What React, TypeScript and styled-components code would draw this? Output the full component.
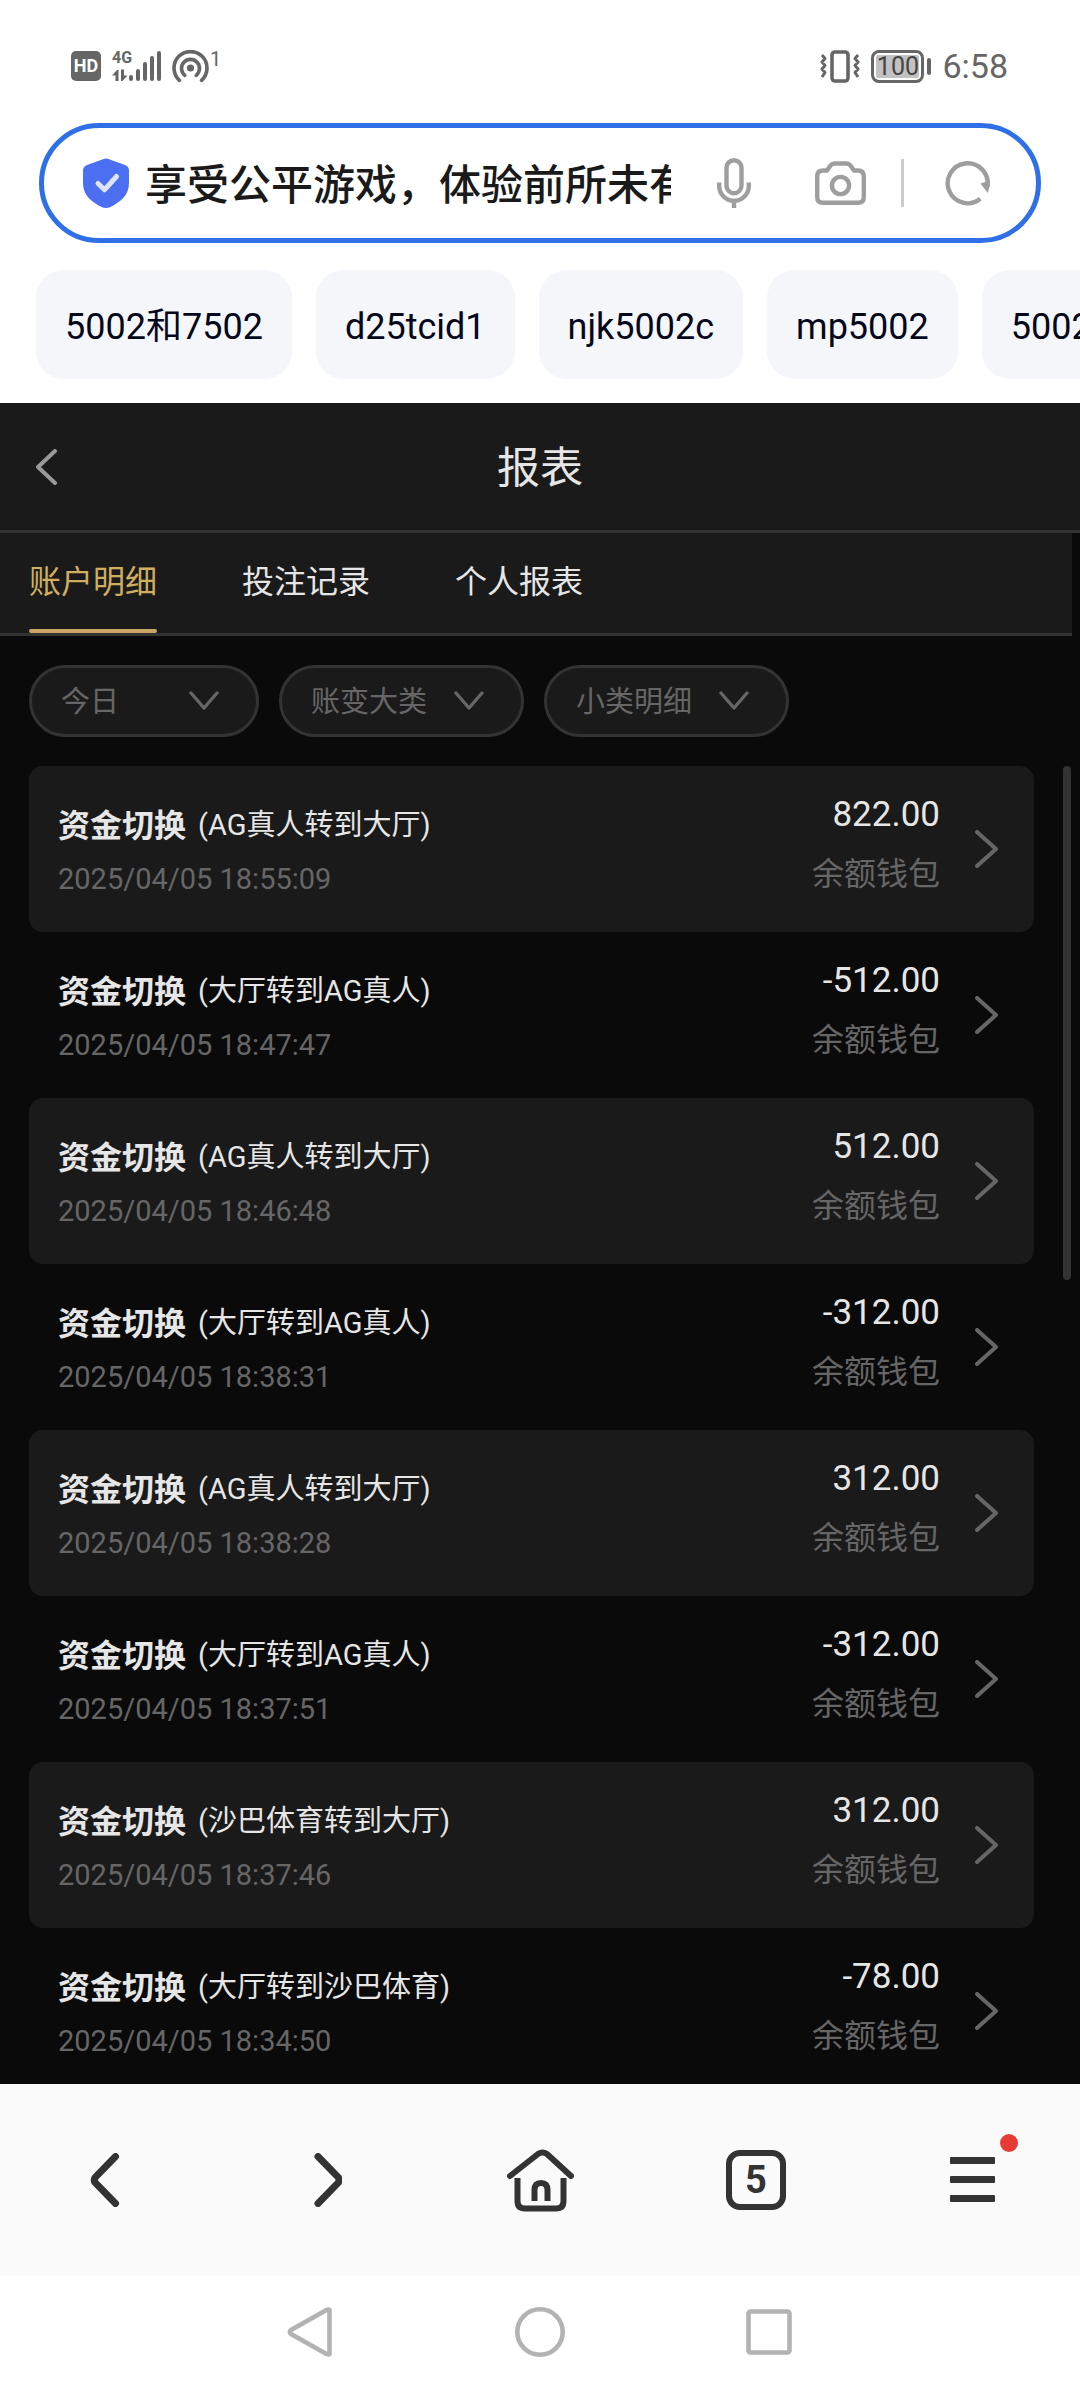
import React from "react";
import styled, { createGlobalStyle } from "styled-components";

const GlobalStyle = createGlobalStyle`
  *, *::before, *::after { box-sizing: border-box; }
  html, body { margin: 0; background: #fff; }
  body, button, input, select {
    font-family: Roboto, "Noto Sans CJK SC", sans-serif;
  }
  button { border: 0; padding: 0; background: none; color: inherit; cursor: pointer; }
  svg { display: block; flex: none; }
`;

const Screen = styled.div`
  display: flex;
  flex-direction: column;
  height: 100vh;
  overflow: hidden;
`;

/* ---------- status bar ---------- */

const StatusBar = styled.div`
  display: flex;
  align-items: center;
  justify-content: space-between;
  padding: 46px 72px 37px 71px;
  height: 123px;
  color: #666;
`;

const StatusGroup = styled.div<{ $gap: number }>`
  display: flex;
  align-items: center;
  gap: ${(p) => p.$gap}px;
`;

const HdBadge = styled.span`
  width: 30px;
  height: 30px;
  border-radius: 5px;
  background: #666;
  color: #fff;
  font-size: 18px;
  font-weight: 700;
  line-height: 30px;
  text-align: center;
`;

const Signal = styled.div`
  display: flex;
  align-items: flex-end;
  height: 32px;
`;

const NetworkType = styled.div`
  display: flex;
  flex-direction: column;
  justify-content: space-between;
  width: 17px;
  height: 32px;
  font-size: 16px;
  font-weight: 700;
  line-height: 16px;
`;

const Hotspot = styled.div`
  display: flex;
  align-items: flex-start;
  gap: 1px;
  height: 32px;
  font-size: 20px;
  line-height: 18px;
`;

const Battery = styled.div`
  display: flex;
  align-items: center;
  gap: 3px;
`;

const BatteryShell = styled.span`
  width: 53px;
  height: 33px;
  padding: 2px;
  border: 3px solid #666;
  border-radius: 8px;
`;

const BatteryLevel = styled.span`
  display: flex;
  align-items: center;
  justify-content: center;
  height: 23px;
  border-radius: 2px;
  background: #c2c2c2;
  color: #444;
  font-size: 25px;
  line-height: 23px;
`;

const BatteryTip = styled.span`
  width: 4px;
  height: 17px;
  border-radius: 2px;
  background: #666;
`;

const Clock = styled.span`
  font-size: 34px;
  line-height: 40px;
`;

/* ---------- address bar ---------- */

const AddressBar = styled.form`
  display: flex;
  align-items: center;
  height: 120px;
  margin: 0 39px;
  padding: 0 45px 0 39px;
  border: 5px solid #2f70e9;
  border-radius: 60px;
`;

const AddressInput = styled.input`
  flex: 1;
  min-width: 0;
  height: 64px;
  margin: 0 46px 0 16px;
  padding: 0 0 3px;
  border: 0;
  outline: 0;
  background: none;
  color: #1a1a1a;
  font-size: 42px;
  font-weight: 500;
`;

const AddressActions = styled.div`
  display: flex;
  align-items: center;
`;

const IconButton = styled.button<{ $width: number; $after?: number }>`
  width: ${(p) => p.$width}px;
  margin-right: ${(p) => p.$after ?? 0}px;
`;

const Divider = styled.span`
  width: 3px;
  height: 48px;
  margin-right: 41px;
  background: #ccc;
`;

/* ---------- suggestions ---------- */

const Chips = styled.div`
  display: flex;
  gap: 24px;
  padding: 27px 0 24px 36px;
  overflow: hidden;
`;

const Chip = styled.button`
  flex: none;
  height: 109px;
  padding: 4px 29px 0;
  border-radius: 28px;
  background: #f4f6fa;
  color: #05071a;
  font-size: 36px;
  line-height: 54px;
`;

/* ---------- report page ---------- */

const Page = styled.main`
  display: flex;
  flex: 1;
  flex-direction: column;
  min-height: 0;
  background: #0a0a0a;
  color: #e6e6e6;
`;

const PageHeader = styled.header`
  display: grid;
  grid-template-columns: 64px 1fr 64px;
  align-items: center;
  height: 130px;
  padding: 0 29px;
  border-bottom: 3px solid #333;
  background: #1a1a1a;
`;

const BackButton = styled.button`
  display: flex;
  align-items: center;
  height: 64px;
  padding-left: 7px;
`;

const PageTitle = styled.h1`
  margin: 0;
  padding-top: 2px;
  font-size: 43px;
  font-weight: 400;
  line-height: 64px;
  text-align: center;
`;

const Tabs = styled.nav`
  display: flex;
  gap: 85px;
  height: 103px;
  margin-right: 8px;
  padding-left: 29px;
  border-bottom: 3px solid #333;
  background: #1a1a1a;
`;

const Tab = styled.button<{ $active?: boolean }>`
  display: flex;
  flex-direction: column;
  justify-content: flex-end;
  color: ${(p) => (p.$active ? "#d0ae60" : "#e6e6e6")};
  font-size: 32px;
  line-height: 48px;

  &::after {
    content: "";
    width: 100%;
    height: 4px;
    margin-top: 23px;
    border-radius: 2px;
    background: ${(p) => (p.$active ? "#c9a663" : "transparent")};
  }
`;

const Filters = styled.div`
  display: flex;
  gap: 20px;
  padding: 29px;
`;

const Filter = styled.label<{ $width: number }>`
  display: flex;
  align-items: center;
  width: ${(p) => p.$width}px;
  height: 72px;
  padding: 0 37px 0 29px;
  border: 3px solid #333;
  border-radius: 36px;
  background: #1a1a1a;
`;

const FilterSelect = styled.select`
  flex: 1;
  min-width: 0;
  height: 48px;
  padding: 2px 0 0;
  border: 0;
  outline: 0;
  appearance: none;
  background: none;
  color: #666;
  font-size: 29px;
`;

const Scroller = styled.div`
  display: flex;
  flex: 1;
  gap: 29px;
  min-height: 0;
  padding: 0 9px 0 29px;
  overflow: hidden;
`;

const RecordList = styled.ul`
  flex: 1;
  min-width: 0;
  margin: 0;
  padding: 0;
  list-style: none;
`;

const ScrollThumb = styled.div`
  width: 8px;
  height: 39%;
  border-radius: 4px;
  background: #333;
`;

const Record = styled.li`
  border-radius: 14px;

  &:nth-child(odd) { background: #1a1a1a; }
`;

const RecordButton = styled.button`
  display: flex;
  align-items: center;
  width: 100%;
  height: 166px;
  padding: 0 35px 0 29px;
  text-align: left;
`;

const RecordInfo = styled.span`
  display: flex;
  flex: 1;
  flex-direction: column;
  gap: 7px;
  padding-top: 5px;
`;

const RecordTitle = styled.span`
  display: flex;
  align-items: center;
  gap: 12px;
  font-size: 29px;
  line-height: 46px;
`;

const RecordKind = styled.strong`
  padding-top: 1px;
  font-size: 32px;
  font-weight: 700;
`;

const RecordTime = styled.time`
  color: #666;
  font-size: 29px;
  line-height: 46px;
`;

const RecordAmount = styled.span`
  display: flex;
  flex-direction: column;
  gap: 13px;
  margin-right: 35px;
  padding-bottom: 9px;
  font-size: 35px;
  line-height: 46px;
  text-align: right;
`;

const RecordWallet = styled.span`
  color: #666;
  font-size: 32px;
  line-height: 46px;
`;

/* ---------- browser toolbar and system keys ---------- */

const Toolbar = styled.nav`
  display: grid;
  grid-template-columns: repeat(5, 1fr);
  height: 192px;
  background: #fafafa;
`;

const ToolButton = styled.button`
  display: flex;
  align-items: center;
  justify-content: center;
  color: #333;
`;

const TabCount = styled.span`
  width: 60px;
  height: 60px;
  border: 6px solid #333;
  border-radius: 14px;
  font-size: 38px;
  font-weight: 700;
  line-height: 48px;
  text-align: center;
`;

const MenuMark = styled.span`
  position: relative;
`;

const NoticeDot = styled.span`
  position: absolute;
  top: -23px;
  right: -23px;
  width: 18px;
  height: 18px;
  border-radius: 50%;
  background: #e83b36;
`;

const SystemKeys = styled.nav`
  display: flex;
  align-items: center;
  justify-content: center;
  gap: 179px;
  height: 112px;
  background: #fff;
`;

/* ---------- icons ---------- */

const SignalBars = () => (
  <svg width="32" height="32" viewBox="0 0 32 32" fill="#666" aria-hidden="true">
    <rect x="0" y="25" width="4" height="6" rx="2" />
    <rect x="7" y="19" width="4" height="12" rx="2" />
    <rect x="14" y="12" width="4" height="19" rx="2" />
    <rect x="21" y="6" width="4" height="25" rx="2" />
    <rect x="28" y="1" width="4" height="30" rx="2" />
  </svg>
);

const DataArrows = () => (
  <svg width="16" height="13" viewBox="0 0 16 13" fill="#666" aria-hidden="true">
    <path d="M6.500 12V1H5L0 6.500h3.500V12zM9 0.500v11.500h1.500L15.500 6.500H12V0.500z" />
  </svg>
);

const HotspotIcon = () => (
  <svg width="37" height="33" viewBox="0 0 37 33" fill="none" stroke="#666" strokeWidth="3.600" strokeLinecap="round" aria-hidden="true">
    <circle cx="18.500" cy="18" r="3.600" fill="#666" stroke="none" />
    <path d="M7.400 30.300a16.500 16.500 0 1 1 22.200 0" />
    <path d="M12.800 25.300a9 9 0 1 1 11.400 0" />
  </svg>
);

const VibrateIcon = () => (
  <svg width="40" height="33" viewBox="0 0 40 33" fill="none" stroke="#666" strokeWidth="3" strokeLinejoin="round" aria-hidden="true">
    <rect x="12" y="2" width="16" height="29" rx="3" strokeWidth="3.600" />
    <path d="M2 5l3 3.500-3 3.500 3 3.500-3 3.500 3 3.500-3 4.500M38 5l-3 3.500 3 3.500-3 3.500 3 3.500-3 3.500 3 4.500" />
  </svg>
);

const ShieldIcon = () => (
  <svg width="46" height="50" viewBox="0 0 46 50" fill="none" aria-hidden="true">
    <path d="M20 1.200q3-1.200 6 0l16 5.700q4 1.500 4 5.500V25c0 12-8 18.500-18.500 24q-4.500 2-9 0C8 43.500 0 37 0 25V12.400q0-4 4-5.500z" fill="#4c6ef0" />
    <path d="M15 25.500l6.500 6.300L33.500 18.500" stroke="#dfe5ff" strokeWidth="5" strokeLinecap="round" strokeLinejoin="round" />
  </svg>
);

const MicIcon = () => (
  <svg width="34" height="50" viewBox="0 0 34 50" fill="none" stroke="#9e9e9e" strokeWidth="4.400" aria-hidden="true">
    <rect x="9.500" y="2.200" width="15" height="33" rx="7.500" />
    <path d="M2.200 24.500v3.500a14.800 14.800 0 0 0 29.600 0v-3.500M17 43v7" />
  </svg>
);

const CameraIcon = () => (
  <svg width="51" height="44" viewBox="0 0 51 44" fill="none" stroke="#9e9e9e" strokeWidth="4.400" strokeLinejoin="round" aria-hidden="true">
    <path d="M8 9.500h4l3.500-5q1.500-2 4-2h12q2.500 0 4 2l3.500 5h4q5.800 0 5.800 6V36q0 5.800-5.800 5.800H8q-5.800 0-5.800-5.800V15.500q0-6 5.800-6z" />
    <circle cx="25.500" cy="24.500" r="8.600" />
  </svg>
);

const ReloadIcon = () => (
  <svg width="46" height="46" viewBox="0 0 46 46" fill="none" aria-hidden="true">
    <path d="M35.300 38.800A20 20 0 1 1 42.500 26" stroke="#9e9e9e" strokeWidth="4.400" />
    <path d="M35.500 23.500l9.200-3v5.500l-2 7z" fill="#9e9e9e" />
  </svg>
);

const ChevronDown = () => (
  <svg width="30" height="20" viewBox="0 0 30 20" fill="none" stroke="#666" strokeWidth="3.400" strokeLinecap="round" strokeLinejoin="round" aria-hidden="true">
    <path d="M2 2l13 15L28 2" />
  </svg>
);

const ChevronRight = () => (
  <svg width="24" height="38" viewBox="0 0 24 38" fill="none" stroke="#666" strokeWidth="4" strokeLinecap="round" strokeLinejoin="round" aria-hidden="true">
    <path d="M2 2l19 17L2 36" />
  </svg>
);

const HeaderBackIcon = () => (
  <svg width="22" height="36" viewBox="0 0 22 36" fill="none" stroke="#999" strokeWidth="4" strokeLinecap="round" strokeLinejoin="round" aria-hidden="true">
    <path d="M19 2L2 18l17 16" />
  </svg>
);

const ToolBackIcon = () => (
  <svg width="36" height="54" viewBox="0 0 36 54" fill="none" stroke="#333" strokeWidth="7" strokeLinecap="round" aria-hidden="true">
    <path d="M25.500 3.500L5.500 24q-2.500 3 0 6l20 20.500" />
  </svg>
);

const ToolForwardIcon = () => (
  <svg width="36" height="54" viewBox="0 0 36 54" fill="none" stroke="#333" strokeWidth="7" strokeLinecap="round" aria-hidden="true">
    <path d="M12 3.500L32 24q2.500 3 0 6L12 50.500" />
  </svg>
);

const HomeIcon = () => (
  <svg width="70" height="63" viewBox="0 0 70 63" fill="none" stroke="#333" strokeWidth="6" aria-hidden="true">
    <path d="M5 27L33 5q4.500-3 9 0l24 22" strokeLinecap="round" strokeLinejoin="round" />
    <path d="M12.500 29v23q0 7.500 7.500 7.500h31q7.500 0 7.500-7.500V29" />
    <path d="M29.500 52V41q0-7 6.500-7t6.500 7v11" />
  </svg>
);

const MenuIcon = () => (
  <svg width="45" height="46" viewBox="0 0 45 46" fill="#333" aria-hidden="true">
    <rect y="0" width="45" height="7" rx="1" />
    <rect y="19" width="45" height="7" rx="1" />
    <rect y="38" width="45" height="7" rx="1" />
  </svg>
);

const KeyIcon = ({ children }: { children: React.ReactNode }) => (
  <svg width="50" height="50" viewBox="0 0 50 50" fill="none" stroke="#b3b3b3" strokeWidth="4.600" strokeLinejoin="round" aria-hidden="true">
    {children}
  </svg>
);

/* ---------- data ---------- */

const suggestions = ["5002和7502", "d25tcid1", "njk5002c", "mp5002", "5002"];

const tabs = ["账户明细", "投注记录", "个人报表"];

const filters = [
  { name: "日期", value: "今日", width: 230 },
  { name: "大类", value: "账变大类", width: 245 },
  { name: "小类", value: "小类明细", width: 245 },
];

const records = [
  { detail: "(AG真人转到大厅)", time: "2025/04/05 18:55:09", amount: "822.00" },
  { detail: "(大厅转到AG真人)", time: "2025/04/05 18:47:47", amount: "-512.00" },
  { detail: "(AG真人转到大厅)", time: "2025/04/05 18:46:48", amount: "512.00" },
  { detail: "(大厅转到AG真人)", time: "2025/04/05 18:38:31", amount: "-312.00" },
  { detail: "(AG真人转到大厅)", time: "2025/04/05 18:38:28", amount: "312.00" },
  { detail: "(大厅转到AG真人)", time: "2025/04/05 18:37:51", amount: "-312.00" },
  { detail: "(沙巴体育转到大厅)", time: "2025/04/05 18:37:46", amount: "312.00" },
  { detail: "(大厅转到沙巴体育)", time: "2025/04/05 18:34:50", amount: "-78.00" },
];

export default function App() {
  return (
    <Screen>
      <GlobalStyle />
      <StatusBar>
        <StatusGroup $gap={11}>
          <HdBadge>HD</HdBadge>
          <Signal>
            <NetworkType>
              <span>4G</span>
              <DataArrows />
            </NetworkType>
            <SignalBars />
          </Signal>
          <Hotspot>
            <HotspotIcon />
            <span>1</span>
          </Hotspot>
        </StatusGroup>
        <StatusGroup $gap={11}>
          <VibrateIcon />
          <Battery>
            <BatteryShell>
              <BatteryLevel>100</BatteryLevel>
            </BatteryShell>
            <BatteryTip />
          </Battery>
          <Clock>6:58</Clock>
        </StatusGroup>
      </StatusBar>

      <AddressBar onSubmit={(e) => e.preventDefault()}>
        <ShieldIcon />
        <AddressInput aria-label="搜索或输入网址" defaultValue="享受公平游戏，体验前所未有" />
        <AddressActions>
          <IconButton type="button" aria-label="语音搜索" $width={34} $after={64}>
            <MicIcon />
          </IconButton>
          <IconButton type="button" aria-label="拍照搜索" $width={51} $after={35}>
            <CameraIcon />
          </IconButton>
          <Divider />
          <IconButton type="button" aria-label="刷新" $width={46}>
            <ReloadIcon />
          </IconButton>
        </AddressActions>
      </AddressBar>

      <Chips>
        {suggestions.map((text) => (
          <Chip key={text} type="button">{text}</Chip>
        ))}
      </Chips>

      <Page>
        <PageHeader>
          <BackButton type="button" aria-label="返回">
            <HeaderBackIcon />
          </BackButton>
          <PageTitle>报表</PageTitle>
        </PageHeader>
        <Tabs>
          {tabs.map((text, i) => (
            <Tab key={text} type="button" $active={i === 0}>{text}</Tab>
          ))}
        </Tabs>
        <Filters>
          {filters.map((f) => (
            <Filter key={f.name} $width={f.width}>
              <FilterSelect aria-label={f.name}>
                <option>{f.value}</option>
              </FilterSelect>
              <ChevronDown />
            </Filter>
          ))}
        </Filters>
        <Scroller>
          <RecordList>
            {records.map((r) => (
              <Record key={r.time}>
                <RecordButton type="button">
                  <RecordInfo>
                    <RecordTitle>
                      <RecordKind>资金切换</RecordKind>
                      <span>{r.detail}</span>
                    </RecordTitle>
                    <RecordTime>{r.time}</RecordTime>
                  </RecordInfo>
                  <RecordAmount>
                    <span>{r.amount}</span>
                    <RecordWallet>余额钱包</RecordWallet>
                  </RecordAmount>
                  <ChevronRight />
                </RecordButton>
              </Record>
            ))}
          </RecordList>
          <ScrollThumb />
        </Scroller>
      </Page>

      <Toolbar>
        <ToolButton type="button" aria-label="后退"><ToolBackIcon /></ToolButton>
        <ToolButton type="button" aria-label="前进"><ToolForwardIcon /></ToolButton>
        <ToolButton type="button" aria-label="主页"><HomeIcon /></ToolButton>
        <ToolButton type="button"><TabCount>5</TabCount></ToolButton>
        <ToolButton type="button" aria-label="菜单">
          <MenuMark>
            <MenuIcon />
            <NoticeDot />
          </MenuMark>
        </ToolButton>
      </Toolbar>

      <SystemKeys>
        <IconButton type="button" aria-label="系统返回" $width={50}>
          <KeyIcon><path d="M43.500 3v44q-1 1-3 0L5 27q-2-2 0-4L40.500 3q2-1 3 0z" /></KeyIcon>
        </IconButton>
        <IconButton type="button" aria-label="系统主页" $width={50}>
          <KeyIcon><circle cx="25" cy="25" r="22.700" /></KeyIcon>
        </IconButton>
        <IconButton type="button" aria-label="最近任务" $width={50}>
          <KeyIcon><rect x="4.500" y="4.500" width="41" height="41" rx="2" /></KeyIcon>
        </IconButton>
      </SystemKeys>
    </Screen>
  );
}
